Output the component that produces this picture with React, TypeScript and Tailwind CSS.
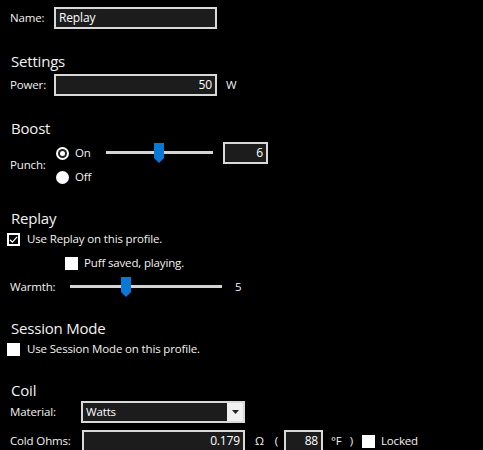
import React from 'react';

const font = { fontFamily: '"Open Sans", "Noto Sans", sans-serif' };

const Heading = ({ children, className = '' }: { children: React.ReactNode; className?: string }) => (
    <div className={`text-[15px] leading-[20px] text-[#f2f2f2] tracking-[-0.2px] ${className}`}>{children}</div>
);

const TextBox = ({ value, className = '', align = 'right' }: { value: string; className?: string; align?: 'left' | 'right' }) => (
    <div
        className={`h-[22px] border-2 border-[#d9d9d9] bg-[#1c1c1c] text-[12px] leading-[18px] text-white px-[3px] ${align === 'right' ? 'text-right' : 'text-left'} ${className}`}
    >
        {value}
    </div>
);

const Check = ({ checked }: { checked?: boolean }) =>
    checked ? (
        <div className="w-[13px] h-[13px] border-2 border-white bg-black flex items-center justify-center">
            <svg viewBox="0 0 10 10" className="w-[9px] h-[9px]">
                <path d="M1 5.2 L3.8 8 L9 2" stroke="white" strokeWidth="1.4" fill="none" />
            </svg>
        </div>
    ) : (
        <div className="w-[13px] h-[13px] bg-white" />
    );

const Slider = ({ width, thumb }: { width: number; thumb: number }) => (
    <div className="relative h-[20px]" style={{ width }}>
        <div className="absolute left-0 right-0 top-[8px] h-[3px] bg-[#d4d4d4]" />
        <svg className="absolute top-0" style={{ left: thumb }} width="10" height="20" viewBox="0 0 10 20">
            <path d="M0 0 H10 V15 L5 20 L0 15 Z" fill="#0a78d7" />
        </svg>
    </div>
);

export default function App() {
    return (
        <div className="w-[483px] h-[450px] overflow-hidden bg-black text-[#f2f2f2] text-[11.5px] tracking-[-0.15px]" style={font}>
            {/* Name */}
            <div className="flex items-center h-[22px] mt-[7px]">
                <span className="w-[54px] pl-[10px]">Name:</span>
                <TextBox value="Replay" align="left" className="w-[163px]" />
            </div>

            {/* Settings */}
            <Heading className="mt-[22px] pl-[11px]">Settings</Heading>
            <div className="flex items-center h-[22px] mt-[3px]">
                <span className="w-[54px] pl-[10px]">Power:</span>
                <TextBox value="50" className="w-[163px]" />
                <span className="ml-[9px]">W</span>
            </div>

            {/* Boost */}
            <Heading className="mt-[22px] pl-[11px]">Boost</Heading>
            <div className="flex mt-[6px]">
                <div className="w-[56px] pl-[10px] flex items-center">Punch:</div>
                <div className="flex flex-col gap-[6px]">
                    <div className="flex items-center h-[18px]">
                        <div className="w-[13px] h-[13px] rounded-full bg-white flex items-center justify-center">
                            <div className="w-[9px] h-[9px] rounded-full bg-[#222] flex items-center justify-center">
                                <div className="w-[5px] h-[5px] rounded-full bg-white" />
                            </div>
                        </div>
                        <span className="ml-[6px] w-[31px]">On</span>
                        <Slider width={107} thumb={48} />
                        <TextBox value="6" className="w-[45px] ml-[10px]" />
                    </div>
                    <div className="flex items-center h-[18px]">
                        <div className="w-[13px] h-[13px] rounded-full bg-white" />
                        <span className="ml-[6px]">Off</span>
                    </div>
                </div>
            </div>

            {/* Replay */}
            <Heading className="mt-[22px] pl-[11px]">Replay</Heading>
            <div className="flex items-center h-[18px] mt-[2px] pl-[7px]">
                <Check checked />
                <span className="ml-[7px]">Use Replay on this profile.</span>
            </div>
            <div className="flex items-center h-[18px] mt-[6px] pl-[65px]">
                <Check />
                <span className="ml-[6px]">Puff saved, playing.</span>
            </div>
            <div className="flex items-center h-[20px] mt-[5px]">
                <span className="w-[70px] pl-[10px]">Warmth:</span>
                <Slider width={152} thumb={51} />
                <span className="ml-[13px]">5</span>
            </div>

            {/* Session Mode */}
            <Heading className="mt-[21px] pl-[11px]">Session Mode</Heading>
            <div className="flex items-center h-[18px] mt-[2px] pl-[7px]">
                <Check />
                <span className="ml-[7px]">Use Session Mode on this profile.</span>
            </div>

            {/* Coil */}
            <Heading className="mt-[22px] pl-[11px]">Coil</Heading>
            <div className="flex items-center h-[22px] mt-[1px]">
                <span className="w-[81px] pl-[10px]">Material:</span>
                <div className="w-[164px] h-[22px] border-2 border-[#d9d9d9] bg-[#1c1c1c] flex">
                    <span className="flex-1 pl-[3px] leading-[18px] text-white">Watts</span>
                    <div className="w-[16px] bg-[#f0f0f0] flex items-center justify-center">
                        <svg width="7" height="4" viewBox="0 0 7 4">
                            <path d="M0 0 H7 L3.5 4 Z" fill="#222" />
                        </svg>
                    </div>
                </div>
            </div>
            <div className="flex items-center h-[22px] mt-[7px]">
                <span className="w-[82px] pl-[10px]">Cold Ohms:</span>
                <TextBox value="0.179" className="w-[163px]" />
                <span className="ml-[10px]">Ω</span>
                <span className="ml-[11px]">(</span>
                <TextBox value="88" className="w-[39px] ml-[6px]" />
                <span className="ml-[8px]">°F</span>
                <span className="ml-[8px]">)</span>
                <div className="ml-[9px]"><Check /></div>
                <span className="ml-[6px]">Locked</span>
            </div>
        </div>
    );
}
